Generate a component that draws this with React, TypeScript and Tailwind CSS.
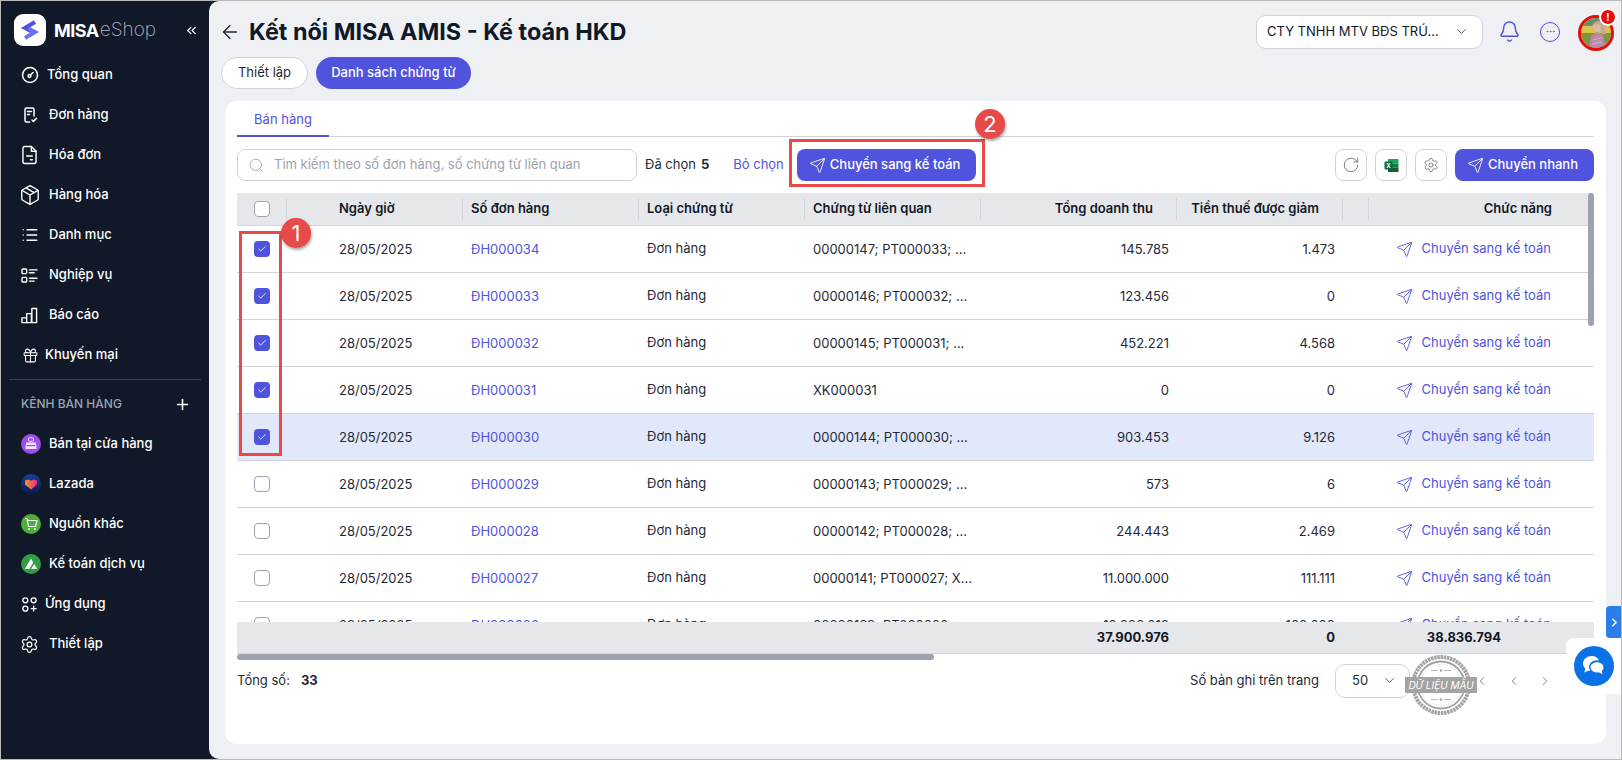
import { ArrowLeft, Bell, ChevronDown, ChevronLeft, ChevronRight, ChevronsLeft, Ellipsis, Gift, List, Package, Plus, RotateCw, Search, Send, Settings, Check } from 'lucide-react';
import type { ReactNode } from 'react';

const iconStroke = { fill: 'none', stroke: 'currentColor', strokeWidth: 1.5, strokeLinecap: 'round', strokeLinejoin: 'round' } as const;

const GaugeIcon = () => (
  <svg width="18" height="18" viewBox="0 0 18 18" {...iconStroke}>
    <circle cx="9" cy="9" r="7.5" />
    <circle cx="8.500" cy="10" r="1.400" />
    <path d="M9.500 9l2.500-2.500" />
  </svg>
);

const OrderIcon = () => (
  <svg width="14" height="16" viewBox="0 0 14 16" {...iconStroke}>
    <path d="M5.500 15H2.500A1.500 1.500 0 0 1 1 13.500V2.500A1.500 1.500 0 0 1 2.500 1h6A1.500 1.500 0 0 1 10 2.500V9" />
    <path d="M3.500 4.500h4M3.500 7.500h2M8 13l1.400 1.400 3.100-3" />
  </svg>
);

const InvoiceIcon = () => (
  <svg width="15" height="20" viewBox="0 0 16 20" {...iconStroke}>
    <path d="M10 1H3a2 2 0 0 0-2 2v14a2 2 0 0 0 2 2h10a2 2 0 0 0 2-2V6z" />
    <path d="M10 1v5h5M5 11h6M9 15h2" />
  </svg>
);

const BusinessIcon = () => (
  <svg width="17" height="15" viewBox="0 0 18 16" {...iconStroke}>
    <rect x="1" y="1" width="5" height="5" rx="1" />
    <rect x="1" y="10" width="5" height="5" rx="1" />
    <path d="M9 2h8M9 5h5M9 11h8M9 14h5" />
  </svg>
);

const ReportIcon = () => (
  <svg width="17" height="17" viewBox="0 0 18 18" {...iconStroke}>
    <path d="M1 11.500h5v5H1zM6 7h5v9.500H6zM11.500 1.500h5v15h-5z" />
  </svg>
);

const AppsIcon = () => (
  <svg width="15" height="15" viewBox="0 0 17 17" {...iconStroke}>
    <circle cx="3.800" cy="3.800" r="2.800" />
    <circle cx="13.200" cy="3.800" r="2.800" />
    <circle cx="3.800" cy="13.200" r="2.800" />
    <path d="M13.200 10.500v5.500M10.500 13.200H16" />
  </svg>
);

const StoreBadge = () => (
  <svg width="20" height="20" viewBox="0 0 20 20">
    <circle cx="10" cy="10" r="10" fill="#9b4df0" />
    <rect x="7.500" y="3.800" width="5" height="3.500" rx="1" fill="none" stroke="#f3e3ff" strokeWidth="1" />
    <path d="M5.500 8.500h9l1 3v3.500h-11v-3.500z" fill="#f3e3ff" />
    <rect x="5.500" y="11" width="9" height="1.200" fill="#9b4df0" />
  </svg>
);

const LazadaBadge = () => (
  <svg width="20" height="20" viewBox="0 0 20 20">
    <defs>
      <linearGradient id="lzbg" x1="0" y1="0" x2="0" y2="1">
        <stop offset="0" stopColor="#1a3f9e" />
        <stop offset="1" stopColor="#0c1a4f" />
      </linearGradient>
      <linearGradient id="lzh" x1="0" y1="0" x2="1" y2="0">
        <stop offset="0" stopColor="#f7941d" />
        <stop offset="1" stopColor="#ec2b8c" />
      </linearGradient>
    </defs>
    <circle cx="10" cy="10" r="10" fill="url(#lzbg)" />
    <path d="M4 6.500l3.500-1 2.500 1.300 2.500-1.300 3.500 1v4L10 15.500 4 10.500z" fill="url(#lzh)" />
  </svg>
);

const CartBadge = () => (
  <svg width="20" height="20" viewBox="0 0 20 20">
    <circle cx="10" cy="10" r="10" fill="#4caf3a" />
    <path d="M4 4.500h2l1.500 8h7L16 6.500H6.300M8 8.500h.01M10.500 8.500h.01M13 8.500h.01" fill="none" stroke="#fff" strokeWidth="1.200" strokeLinejoin="round" />
    <circle cx="8.200" cy="15" r="1.100" fill="#fff" />
    <circle cx="13.800" cy="15" r="1.100" fill="#fff" />
  </svg>
);

const AccountingBadge = () => (
  <svg width="20" height="20" viewBox="0 0 20 20">
    <circle cx="10" cy="10" r="10" fill="#2f9e44" />
    <path d="M3.800 15L10 4.500l2.300 4-4 6.500z" fill="#fff" />
    <path d="M10 15l3.300-5 3 5z" fill="#fff" />
  </svg>
);

const LogoMark = () => (
  <svg width="32" height="32" viewBox="0 0 32 32">
    <rect width="32" height="32" rx="9" fill="#fff" />
    <path d="M21 8l-10 6 6.500 3.500" fill="none" stroke="#4f53dd" strokeWidth="4" />
    <path d="M11 24l10-6-6.500-3.500" fill="none" stroke="#6d72f0" strokeWidth="4" />
  </svg>
);

const ExcelIcon = () => (
  <svg width="15" height="15" viewBox="0 0 15 15">
    <rect x="4" y="1" width="10.500" height="4.500" fill="#21a366" />
    <rect x="4" y="5.500" width="10.500" height="4" fill="#107c41" />
    <rect x="4" y="9.500" width="10.500" height="4.500" fill="#185c37" />
    <rect x="0.500" y="3.500" width="8" height="8" rx="1" fill="#0e6b3a" />
    <text x="4.500" y="10" fontSize="6" fontWeight="700" fill="#fff" textAnchor="middle" fontFamily="Inter">X</text>
  </svg>
);

const AvatarPhoto = () => (
  <svg width="30" height="30" viewBox="0 0 30 30" className="rounded-full">
    <rect width="30" height="30" fill="#8c9a3e" />
    <rect width="30" height="8" fill="#6f8a6a" />
    <rect y="8" width="30" height="7" fill="#d7c44a" />
    <rect y="15" width="30" height="15" fill="#7f9440" />
    <path d="M11 8c2-6 11-7 13-1l1 9h-4l-3-6-4 1z" fill="#c7ab94" />
    <circle cx="16" cy="10" r="3.800" fill="#dcb9a5" />
    <path d="M8 30l2-12 6-4 6 3 3 13z" fill="#b88aa8" />
    <path d="M12 22l8-2M11 26l10-2" stroke="#d6b3cb" strokeWidth="1" />
  </svg>
);

const ChatIcon = () => (
  <svg width="24" height="22" viewBox="0 0 24 22">
    <path d="M10 1C4.900 1 1 4.400 1 8.600c0 2 .9 3.800 2.300 5.100L2.300 17.500l4.200-1.900c.7.200 1.300.3 2 .4-.9-1.200-1.400-2.500-1.400-4 0-3.800 3.500-6.700 7.900-6.700.8 0 1.500.1 2.200.3C15.900 2.900 13.200 1 10 1z" fill="#fff" />
    <path d="M15 7.200c-3.700 0-6.500 2.300-6.500 5.100s2.800 5.100 6.500 5.100c.6 0 1.200-.1 1.800-.2l3.700 2-.7-3.200c1.100-.9 1.700-2.200 1.700-3.700 0-2.800-2.800-5.100-6.500-5.100z" fill="#fff" />
  </svg>
);

const menuTop: { label: string; icon: ReactNode; className: string }[] = [
  { label: 'Tổng quan', icon: <GaugeIcon />, className: 'gap-[8px] pl-[20px]' },
  { label: 'Đơn hàng', icon: <OrderIcon />, className: 'gap-[11px] pl-[23px]' },
  { label: 'Hóa đơn', icon: <InvoiceIcon />, className: 'gap-[12px] pl-[21px]' },
  { label: 'Hàng hóa', icon: <Package size={22} strokeWidth={1.5} />, className: 'gap-[8px] pl-[18px]' },
  { label: 'Danh mục', icon: <List size={18} strokeWidth={1.75} />, className: 'gap-[10px] pl-[20px]' },
  { label: 'Nghiệp vụ', icon: <BusinessIcon />, className: 'gap-[11px] pl-[20px]' },
  { label: 'Báo cáo', icon: <ReportIcon />, className: 'gap-[11px] pl-[20px]' },
  { label: 'Khuyến mại', icon: <Gift size={17} strokeWidth={1.5} />, className: 'gap-[6px] pl-[21px]' },
];

const channels: { label: string; icon: ReactNode }[] = [
  { label: 'Bán tại cửa hàng', icon: <StoreBadge /> },
  { label: 'Lazada', icon: <LazadaBadge /> },
  { label: 'Nguồn khác', icon: <CartBadge /> },
  { label: 'Kế toán dịch vụ', icon: <AccountingBadge /> },
];

const rows = [
  { code: 'ĐH000034', docs: '00000147; PT000033; ...', revenue: '145.785', tax: '1.473', checked: true },
  { code: 'ĐH000033', docs: '00000146; PT000032; ...', revenue: '123.456', tax: '0', checked: true },
  { code: 'ĐH000032', docs: '00000145; PT000031; ...', revenue: '452.221', tax: '4.568', checked: true },
  { code: 'ĐH000031', docs: 'XK000031', revenue: '0', tax: '0', checked: true },
  { code: 'ĐH000030', docs: '00000144; PT000030; ...', revenue: '903.453', tax: '9.126', checked: true, active: true },
  { code: 'ĐH000029', docs: '00000143; PT000029; ...', revenue: '573', tax: '6' },
  { code: 'ĐH000028', docs: '00000142; PT000028; ...', revenue: '244.443', tax: '2.469' },
  { code: 'ĐH000027', docs: '00000141; PT000027; X...', revenue: '11.000.000', tax: '111.111' },
  { code: 'ĐH000026', docs: '00000139; PT000026; ...', revenue: '10.098.010', tax: '100.000' },
];

const columns = 'grid grid-cols-[49px_176px_176px_166px_176px_196px_166px_26px_220px]';

const Checkbox = ({ checked }: { checked?: boolean }) =>
  checked ? (
    <span className="flex h-4 w-4 items-center justify-center rounded-[4px] bg-[#4f53dd] text-white">
      <Check size={10} strokeWidth={2} />
    </span>
  ) : (
    <span className="block h-4 w-4 rounded-[4px] border border-[#9ca3af] bg-white" />
  );

const HeadDivider = () => <span className="-mr-px h-[22px] w-px shrink-0 bg-[#d1d5db]" />;

const SideItem = ({ icon, label, className }: { icon: ReactNode; label: string; className: string }) => (
  <div className={`flex h-[40px] items-center text-[13px] font-medium text-white ${className}`}>
    <span className="flex shrink-0 items-center justify-center">{icon}</span>
    <span>{label}</span>
  </div>
);

const IconButton = ({ children }: { children: ReactNode }) => (
  <button className="flex h-8 w-8 items-center justify-center rounded-[8px] border border-[#d1d5db] bg-white text-[#6b7280]">
    {children}
  </button>
);

const Stamp = () => (
  <div className="absolute left-[1410px] top-[654px] flex h-[60px] w-[60px] items-center justify-center">
    <svg width="60" height="60" viewBox="0 0 60 60" className="absolute inset-0">
      <circle cx="30" cy="30" r="28" fill="#fff" stroke="#a3a3a3" strokeWidth="4" strokeDasharray="2.500 0.700" />
      <circle cx="30" cy="30" r="23.500" fill="none" stroke="#a3a3a3" strokeWidth="1.800" />
      <circle cx="30" cy="30" r="20.500" fill="none" stroke="#c4c4c4" strokeWidth="0.700" strokeDasharray="1 1" />
      <path d="M20 15.500h7M33 15.500h7M20 44.500h7M33 44.500h7" stroke="#a3a3a3" strokeWidth="0.800" />
      <circle cx="30" cy="15.500" r="1.200" fill="#a3a3a3" />
      <circle cx="30" cy="44.500" r="1.200" fill="#a3a3a3" />
    </svg>
    <span className="relative flex h-[16px] w-[72px] shrink-0 items-center justify-center whitespace-nowrap bg-[#a3a3a3] text-[10px] italic text-white">DỮ LIỆU MẪU</span>
  </div>
);

export default function App() {
  return (
    <div className="relative flex h-[760px] w-[1622px] overflow-hidden border border-[#b9b9b9] bg-[#111928] font-['Inter',sans-serif]">
      <aside className="flex w-[208px] shrink-0 flex-col text-white">
        <div className="flex h-[54px] items-center pl-[13px] pr-[10px] pt-[4px]">
          <LogoMark />
          <span className="ml-[8px] text-[18px] font-bold tracking-[-0.5px]">MISA</span>
          <span className="ml-px text-[19px] font-extralight text-[#b0b5bf]">eShop</span>
          <ChevronsLeft size={15} className="ml-auto" />
        </div>
        <div>
          {menuTop.map((m) => (
            <SideItem key={m.label} icon={m.icon} label={m.label} className={m.className} />
          ))}
        </div>
        <div className="mx-[8px] mt-[4px] h-px bg-[#374151]" />
        <div className="flex h-[48px] items-center justify-between pl-[20px] pr-[18px] text-[12px] font-medium text-[#9ca3af]">
          <span>KÊNH BÁN HÀNG</span>
          <Plus size={17} strokeWidth={2.250} className="text-white" />
        </div>
        <div className="-mt-[4px]">
          {channels.map((c) => (
            <SideItem key={c.label} icon={c.icon} label={c.label} className="gap-[8px] pl-[20px]" />
          ))}
          <SideItem icon={<AppsIcon />} label="Ứng dụng" className="gap-[8px] pl-[21px]" />
          <SideItem icon={<Settings size={19} strokeWidth={1.5} />} label="Thiết lập" className="gap-[10px] pl-[19px]" />
        </div>
      </aside>

      <main className="flex min-w-0 flex-1 flex-col rounded-l-[10px] bg-[#eef0f4]">
        <header className="flex h-[56px] shrink-0 items-center pl-[10px] pr-[7px] pt-[5px]">
          <ArrowLeft size={22} strokeWidth={1.5} className="text-[#1f2937]" />
          <h1 className="ml-[8px] text-[23.400px] font-bold leading-none text-[#111827]">Kết nối MISA AMIS - Kế toán HKD</h1>
          <div className="ml-auto flex h-[34px] w-[227px] items-center justify-between rounded-[10px] border border-[#d1d5db] bg-white pl-[10px] pr-[13px] text-[13px] text-[#111827]">
            <span>CTY TNHH MTV BĐS TRÚ...</span>
            <ChevronDown size={15} strokeWidth={1.5} className="text-[#4b5563]" />
          </div>
          <Bell size={23} strokeWidth={1.5} className="ml-[15px] text-[#4f53dd]" />
          <span className="ml-[19px] flex h-5 w-5 items-center justify-center rounded-full border border-[#4f53dd] text-[#4f53dd]">
            <Ellipsis size={11} strokeWidth={1.5} />
          </span>
          <span className="relative ml-[18px] mt-[2px] flex h-[36px] w-[36px] items-center justify-center overflow-hidden rounded-full border-[3px] border-[#e60d0d]">
            <AvatarPhoto />
          </span>
        </header>

        <div className="flex h-[32px] shrink-0 gap-[8px] pl-[12px] text-[13px]">
          <button className="h-full w-[87px] rounded-full border border-[#d1d5db] bg-white text-[#1f2937]">Thiết lập</button>
          <button className="h-full w-[155px] rounded-full bg-[#4f53dd] font-medium text-white">Danh sách chứng từ</button>
        </div>

        <section className="ml-[16px] mr-[15px] mt-[12px] flex h-[643px] flex-col rounded-[12px] bg-white px-[12px]">
          <div className="flex h-[36px] shrink-0 border-b border-[#d1d5db]">
            <div className="flex h-[36px] w-[92px] items-center justify-center border-b-2 border-[#4f53dd] pt-[3px] text-[13px] text-[#4f53dd]">Bán hàng</div>
          </div>

          <div className="mt-[12px] flex h-[32px] shrink-0 items-center text-[13px]">
            <div className="flex h-full w-[400px] items-center gap-[9px] rounded-[8px] border border-[#d1d5db] pl-[10px] text-[#9ca3af]">
              <Search size={17} strokeWidth={1.25} />
              <span>Tìm kiếm theo số đơn hàng, số chứng từ liên quan</span>
            </div>
            <span className="ml-[8px] text-[#1f2937]">Đã chọn</span>
            <span className="ml-[5px] font-bold text-[#1f2937]">5</span>
            <span className="ml-[24px] text-[#4f53dd]">Bỏ chọn</span>
            <button className="ml-[13px] flex h-full w-[179px] items-center gap-[4px] rounded-[8px] bg-[#4f53dd] pl-[12px] font-medium text-white">
              <Send size={17} strokeWidth={1.25} />
              Chuyển sang kế toán
            </button>
            <div className="ml-auto flex items-center gap-[8px]">
              <IconButton><RotateCw size={18} strokeWidth={1.25} /></IconButton>
              <IconButton><ExcelIcon /></IconButton>
              <IconButton><Settings size={16} strokeWidth={1.25} /></IconButton>
              <button className="flex h-8 w-[139px] items-center gap-[4px] rounded-[8px] bg-[#4f53dd] pl-[12px] font-medium text-white">
                <Send size={17} strokeWidth={1.25} />
                Chuyển nhanh
              </button>
            </div>
          </div>

          <div className="relative mt-[12px] shrink-0 overflow-hidden text-[13px] text-[#1f2937]">
            <div className={`${columns} h-[33px] border-b border-[#d1d5db] bg-[#e5e7eb] font-semibold text-[#111827]`}>
              <div className="flex items-center justify-between"><span className="ml-[17px]"><Checkbox /></span><HeadDivider /></div>
              <div className="flex items-center justify-between pl-[53px]"><span>Ngày giờ</span><HeadDivider /></div>
              <div className="flex items-center justify-between pl-[9px]"><span>Số đơn hàng</span><HeadDivider /></div>
              <div className="flex items-center justify-between pl-[9px]"><span>Loại chứng từ</span><HeadDivider /></div>
              <div className="flex items-center justify-between pl-[9px]"><span>Chứng từ liên quan</span><HeadDivider /></div>
              <div className="flex items-center justify-end"><span className="mr-[23px]">Tổng doanh thu</span><HeadDivider /></div>
              <div className="flex items-center justify-end"><span className="mr-[23px]">Tiền thuế được giảm</span><HeadDivider /></div>
              <div className="flex items-center justify-end"><HeadDivider /></div>
              <div className="flex items-center justify-end pr-[36px]"><span>Chức năng</span></div>
            </div>

            <div className="h-[396px] overflow-hidden">
              {rows.map((r) => (
                <div key={r.code} className={`${columns} h-[47px] items-center border-b border-[#d1d5db] pt-[2px] ${r.active ? 'bg-[#e0e8fa]' : ''}`}>
                  <div className="-mt-[2px] pl-[17px]"><Checkbox checked={r.checked} /></div>
                  <div className="pl-[53px]">28/05/2025</div>
                  <div className="pl-[9px] text-[#4f53dd]">{r.code}</div>
                  <div className="-mt-[2px] pl-[9px]">Đơn hàng</div>
                  <div className="pl-[9px]">{r.docs}</div>
                  <div className="pr-[7px] text-right">{r.revenue}</div>
                  <div className="pr-[7px] text-right">{r.tax}</div>
                  <div />
                  <div className="-mt-[2px] flex items-center justify-end gap-[9px] pr-[37px] text-[#4f53dd]">
                    <Send size={17} strokeWidth={1.25} />
                    <span>Chuyển sang kế toán</span>
                  </div>
                </div>
              ))}
            </div>

            <div className={`${columns} h-[32px] items-center border-b border-[#d1d5db] bg-[#e5e7eb] font-bold text-[#111827]`}>
              <div className="col-span-5" />
              <div className="pr-[7px] text-right">37.900.976</div>
              <div className="pr-[7px] text-right">0</div>
              <div />
              <div className="pr-[87px] text-right">38.836.794</div>
            </div>

            <div className="h-[6px] w-[697px] rounded-full bg-[#9ca3af]" />
            <div className="absolute right-0 top-0 h-[133px] w-[6px] rounded-full bg-[#9ca3af]" />
          </div>

          <div className="flex h-[40px] shrink-0 items-center pt-[1px] text-[13px] text-[#1f2937]">
            <span>Tổng số:</span>
            <span className="ml-[11px] font-bold">33</span>
            <span className="ml-auto">Số bản ghi trên trang</span>
            <div className="ml-[16px] flex h-[34px] w-[75px] items-center justify-between rounded-[10px] border border-[#d1d5db] pl-[16px] pr-[12px] text-[13px]">
              <span>50</span>
              <ChevronDown size={15} strokeWidth={1.5} className="text-[#4b5563]" />
            </div>
            <div className="ml-[65px] flex w-[77px] items-center justify-between text-[#4b5563]">
              <ChevronLeft size={14} strokeWidth={1.25} />
              <ChevronLeft size={14} strokeWidth={1.25} />
              <ChevronRight size={14} strokeWidth={1.25} />
            </div>
            <span className="w-[42px]" />
          </div>
        </section>
      </main>

      <Stamp />

      {/* annotations drawn on top of the screenshot */}
      <div className="absolute left-[238px] top-[230px] h-[225px] w-[43px] border-[3px] border-[#e84a4a]" />
      <div className="absolute left-[788px] top-[138px] h-[48px] w-[196px] border-[3px] border-[#e84a4a]" />
      <div className="absolute left-[280px] top-[217px] flex h-[30px] w-[30px] items-center justify-center rounded-full bg-[#e84a4a] text-[22px] text-white shadow-[1px_2px_3px_rgba(0,0,0,0.35)]">1</div>
      <div className="absolute left-[974px] top-[108px] flex h-[30px] w-[30px] items-center justify-center rounded-full bg-[#e84a4a] text-[22px] text-white shadow-[1px_2px_3px_rgba(0,0,0,0.35)]">2</div>

      <div className="absolute left-[1598px] top-[7px] flex h-[18px] w-[18px] items-center justify-center rounded-full border-2 border-white bg-[#e60d0d] text-[10px] font-bold text-white">!</div>

      <div className="absolute -right-px top-[605px] flex h-[32px] w-[16px] items-center justify-center rounded-l-[4px] bg-[#2b7de9] text-white">
        <ChevronRight size={13} strokeWidth={3} />
      </div>
      <div className="absolute -right-px top-[637px] flex h-[56px] w-[56px] items-center justify-center rounded-l-[8px] bg-white">
        <span className="flex h-10 w-10 items-center justify-center rounded-full bg-[#0b72e5]">
          <ChatIcon />
        </span>
      </div>
    </div>
  );
}
